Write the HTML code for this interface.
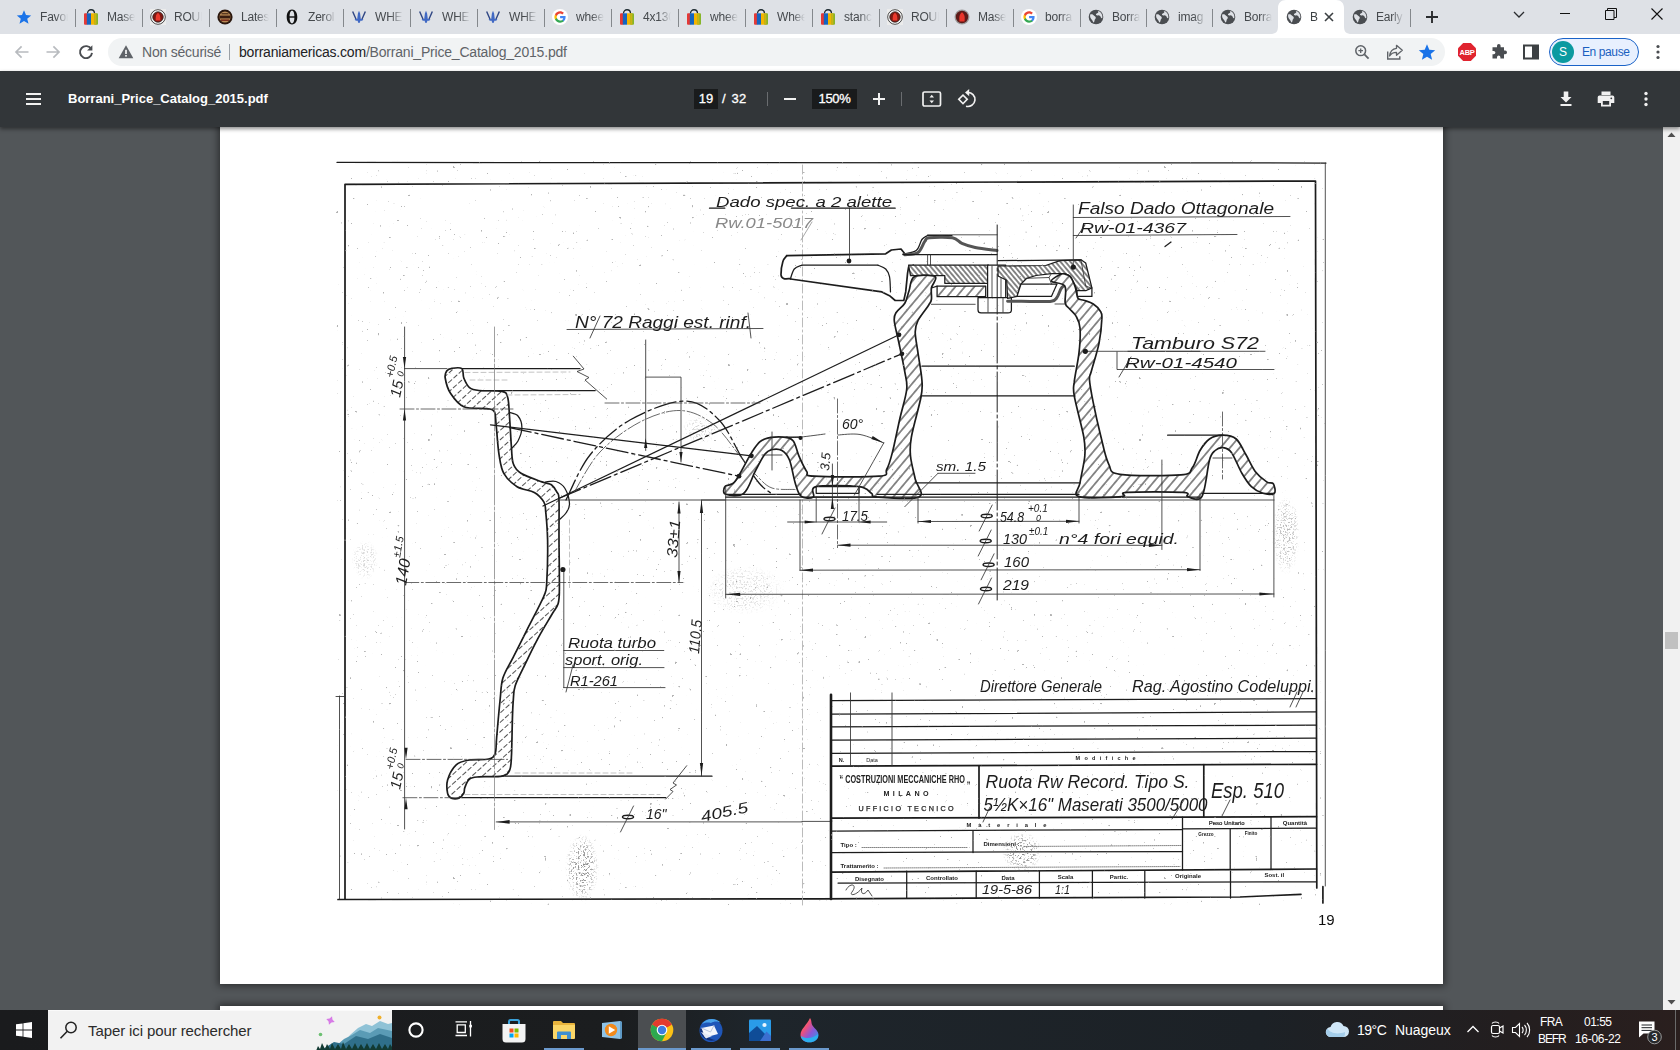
<!DOCTYPE html>
<html><head><meta charset="utf-8">
<style>
*{box-sizing:border-box;margin:0;padding:0}
html,body{width:1680px;height:1050px;overflow:hidden;background:#525659;font-family:"Liberation Sans",sans-serif}
.abs{position:absolute}
#tabbar{position:absolute;left:0;top:0;width:1680px;height:34px;background:#dee1e6}
.tab{position:absolute;top:0;height:34px;width:67px;font-size:12px;letter-spacing:-.2px;color:#45494d;line-height:34px;white-space:nowrap;overflow:hidden}
.tab .ic{position:absolute;left:8px;top:9px;width:16px;height:16px}
.tab .tx{position:absolute;left:32px;top:0;width:28px;overflow:hidden;-webkit-mask-image:linear-gradient(90deg,#000 55%,transparent 100%);mask-image:linear-gradient(90deg,#000 55%,transparent 100%)}
.acttab{position:absolute;top:0;width:83px;height:34px}
.sep{position:absolute;top:9px;width:1px;height:18px;background:#84888c}
#toolbar{position:absolute;left:0;top:34px;width:1680px;height:37px;background:#fff}
#omni{position:absolute;left:108px;top:4px;width:1337px;height:28px;border-radius:14px;background:#f1f3f4}
#pdfbar{position:absolute;left:0;top:71px;width:1680px;height:56px;background:#323639;box-shadow:0 2px 4px rgba(0,0,0,.45);z-index:3}
#view{position:absolute;left:0;top:127px;width:1664px;height:883px;background:#525659;overflow:hidden}
#page{position:absolute;left:220px;top:-20px;width:1223px;height:877px;background:#fff;box-shadow:0 0 7px 2px rgba(0,0,0,.45)}
#page2{position:absolute;left:220px;top:879px;width:1223px;height:60px;background:#fff;box-shadow:0 0 7px 2px rgba(0,0,0,.45)}
#scroll{position:absolute;left:1663px;top:127px;width:17px;height:883px;background:#f1f1f1}
#taskbar{position:absolute;left:0;top:1010px;width:1680px;height:40px;background:linear-gradient(90deg,#1a1b1d 0,#1b1d1f 37%,#1e252b 45%,#1c2126 75%,#231e1f 90%,#2a1f1e 100%);z-index:5}
.tt{color:#fff;line-height:16px;white-space:nowrap}
</style></head><body>
<!--TABBAR-->
<svg width="0" height="0" style="position:absolute">
<defs>
<symbol id="i-star" viewBox="0 0 16 16"><path d="M8 1.2 L10 6 L15.2 6.4 L11.2 9.8 L12.5 14.8 L8 12.1 L3.5 14.8 L4.8 9.8 L0.8 6.4 L6 6 Z" fill="#1a73e8"/></symbol>
<symbol id="i-bag" viewBox="0 0 16 16"><path d="M4.5 4.5 C4.5 -0.5 11.5 -0.5 11.5 4.5" fill="none" stroke="#1d2a30" stroke-width="1.3"/><rect x="1" y="4.3" width="3.6" height="11.4" rx="1" fill="#e53935"/><rect x="3.8" y="4.3" width="4.2" height="11.4" fill="#1565c0"/><rect x="8" y="4.3" width="4" height="11.4" fill="#f4b400"/><rect x="11.4" y="4.3" width="3.6" height="11.4" rx="1" fill="#86b52a"/><rect x="11.4" y="4.3" width="2" height="11.4" fill="#c9b414"/></symbol>
<symbol id="i-red" viewBox="0 0 16 16"><rect width="16" height="16" fill="#ececec"/><circle cx="8" cy="8" r="7.300" fill="#fff" stroke="#333" stroke-width=".9"/><circle cx="8" cy="8" r="5.300" fill="#7d1912" stroke="#2a2a2a" stroke-width=".7"/><path d="M8 3.800 C9.900 5 10.600 7.500 10.300 11.500 H5.700 C5.400 7.500 6.100 5 8 3.800Z" fill="#ea3a2d"/></symbol>
<symbol id="i-red2" viewBox="0 0 16 16"><circle cx="8" cy="8" r="7.5" fill="#9a9a9a"/><circle cx="8" cy="8" r="6.2" fill="#5d1a18"/><path d="M8 3.2 C10.8 5 11 8.5 10.5 12.5 H5.5 C5 8.5 5.2 5 8 3.2Z" fill="#e8352b"/></symbol>
<symbol id="i-brown" viewBox="0 0 16 16"><circle cx="8" cy="8" r="7.6" fill="#2a170e"/><circle cx="8" cy="8" r="5.6" fill="#b98a55"/><rect x="2.5" y="6.6" width="11" height="2.8" fill="#3a1d10"/><rect x="4" y="10.4" width="8" height="1.6" fill="#7a2d1c"/><rect x="4.5" y="4" width="7" height="1.4" fill="#5b3a22"/></symbol>
<symbol id="i-theta" viewBox="0 0 16 16"><path d="M8 0.600 C11.300 0.600 13.300 3.800 13.300 8 C13.300 12.200 11.300 15.400 8 15.400 C4.700 15.400 2.700 12.200 2.700 8 C2.700 3.800 4.700 0.600 8 0.600 Z M8 1.700 C6.300 1.700 5.600 4.200 5.600 8 C5.600 11.800 6.300 14.300 8 14.300 C9.700 14.300 10.400 11.800 10.400 8 C10.400 4.200 9.700 1.700 8 1.700 Z" fill="#111" fill-rule="evenodd"/><rect x="5" y="7.300" width="6" height="1.400" fill="#111"/></symbol>
<symbol id="i-tri" viewBox="0 0 16 16"><path d="M1 2.700 L2.300 2.300 L5.800 10.200 H4.300 Z M15 2.700 L13.700 2.300 L10.200 10.200 H11.700 Z" fill="#2f4684"/><path d="M8 1.800 L9.100 4.500 L9.800 10.100 H6.200 L6.900 4.500 Z M3.600 10 H12.400 L11.300 11.700 H4.700 Z M6.700 11.700 H9.300 L8.900 13.700 H7.100 Z" fill="#4169c4"/></symbol>
<symbol id="i-g" viewBox="0 0 16 16"><circle cx="8" cy="8" r="8" fill="#fff"/><path d="M13.6 8.1c0-.4 0-.8-.1-1.2H8.100v2.300h3.100c-.1.700-.5 1.300-1.100 1.700v1.400h1.800c1.100-1 1.700-2.400 1.700-4.200z" fill="#4285f4"/><path d="M8.100 13.700c1.500 0 2.800-.5 3.800-1.400l-1.800-1.400c-.5.300-1.200.600-2 .600-1.500 0-2.700-1-3.200-2.400H3v1.500c.900 1.900 2.800 3.100 5.100 3.100z" fill="#34a853"/><path d="M4.900 9.100c-.1-.3-.2-.7-.2-1.100s.1-.8.200-1.100V5.400H3C2.600 6.200 2.400 7.100 2.400 8s.2 1.800.6 2.600l1.900-1.500z" fill="#fbbc05"/><path d="M8.100 4.500c.8 0 1.600.3 2.200.9l1.600-1.600c-1-.9-2.300-1.500-3.800-1.500-2.300 0-4.200 1.300-5.100 3.100l1.900 1.500c.5-1.400 1.700-2.400 3.200-2.400z" fill="#ea4335"/></symbol>
<symbol id="i-globe" viewBox="0 0 16 16"><circle cx="8" cy="8" r="7.3" fill="#4a4d51"/><path d="M2.200 5.500 C3.500 4.800 5 5.200 5.600 6.300 C6.100 7.300 7.600 7.200 7.800 8.400 C8 9.600 6.600 10 6.600 11.200 C6.600 12.200 6 13.200 5.200 13.400 C4.800 12 4.400 11 3.400 10.200 C2.400 9.300 1.800 7.500 2.200 5.500Z M8.300 1.600 C9.800 1.800 10.600 2.600 10.200 3.600 C9.700 4.600 8.300 4.300 8 5.300 C7.600 6.300 9 6.600 10 6.400 C11.200 6.200 12.200 7 12.800 8.200 C13.200 9.200 13.800 9.400 14.300 9 C14.800 6.500 13.500 2.300 8.300 1.600Z" fill="#dee1e6"/></symbol>
</defs></svg>
<div id="tabbar">
<div class="tab" style="left:8px"><svg class="ic"><use href="#i-star"/></svg><span class="tx">Favor</span></div>
<div class="sep" style="left:75px"></div>
<div class="tab" style="left:75px"><svg class="ic"><use href="#i-bag"/></svg><span class="tx">Mase</span></div>
<div class="sep" style="left:142px"></div>
<div class="tab" style="left:142px"><svg class="ic"><use href="#i-red"/></svg><span class="tx">ROUE</span></div>
<div class="sep" style="left:209px"></div>
<div class="tab" style="left:209px"><svg class="ic"><use href="#i-brown"/></svg><span class="tx">Lates</span></div>
<div class="sep" style="left:276px"></div>
<div class="tab" style="left:276px"><svg class="ic"><use href="#i-theta"/></svg><span class="tx">Zerol</span></div>
<div class="sep" style="left:343px"></div>
<div class="tab" style="left:343px"><svg class="ic"><use href="#i-tri"/></svg><span class="tx">WHE</span></div>
<div class="sep" style="left:410px"></div>
<div class="tab" style="left:410px"><svg class="ic"><use href="#i-tri"/></svg><span class="tx">WHE</span></div>
<div class="sep" style="left:477px"></div>
<div class="tab" style="left:477px"><svg class="ic"><use href="#i-tri"/></svg><span class="tx">WHE</span></div>
<div class="sep" style="left:544px"></div>
<div class="tab" style="left:544px"><svg class="ic"><use href="#i-g"/></svg><span class="tx">whee</span></div>
<div class="sep" style="left:611px"></div>
<div class="tab" style="left:611px"><svg class="ic"><use href="#i-bag"/></svg><span class="tx">4x130</span></div>
<div class="sep" style="left:678px"></div>
<div class="tab" style="left:678px"><svg class="ic"><use href="#i-bag"/></svg><span class="tx">whee</span></div>
<div class="sep" style="left:745px"></div>
<div class="tab" style="left:745px"><svg class="ic"><use href="#i-bag"/></svg><span class="tx">Whee</span></div>
<div class="sep" style="left:812px"></div>
<div class="tab" style="left:812px"><svg class="ic"><use href="#i-bag"/></svg><span class="tx">stanc</span></div>
<div class="sep" style="left:879px"></div>
<div class="tab" style="left:879px"><svg class="ic"><use href="#i-red"/></svg><span class="tx">ROUE</span></div>
<div class="sep" style="left:946px"></div>
<div class="tab" style="left:946px"><svg class="ic"><use href="#i-red2"/></svg><span class="tx">Mase</span></div>
<div class="sep" style="left:1013px"></div>
<div class="tab" style="left:1013px"><svg class="ic"><use href="#i-g"/></svg><span class="tx">borra</span></div>
<div class="sep" style="left:1080px"></div>
<div class="tab" style="width:66px;left:1080px"><svg class="ic"><use href="#i-globe"/></svg><span class="tx">Borra</span></div>
<div class="sep" style="left:1146px"></div>
<div class="tab" style="width:66px;left:1146px"><svg class="ic"><use href="#i-globe"/></svg><span class="tx">imag</span></div>
<div class="sep" style="left:1212px"></div>
<div class="tab" style="width:66px;left:1212px"><svg class="ic"><use href="#i-globe"/></svg><span class="tx">Borra</span></div>
<div class="acttab" style="left:1270px"><svg width="82" height="34" viewBox="0 0 82 34"><path d="M0 34 C6 34 8 32 8 26 V8 C8 3 11 0 16 0 H66 C71 0 74 3 74 8 V26 C74 32 76 34 82 34 Z" fill="#fff"/></svg></div>
<div class="tab" style="width:66px;left:1278px;color:#3c4043"><svg class="ic"><use href="#i-globe"/></svg><span class="tx" style="width:12px">B</span><svg class="abs" style="left:45px;top:11px" width="12" height="12" viewBox="0 0 12 12"><path d="M2 2 L10 10 M10 2 L2 10" stroke="#3c4043" stroke-width="1.6" fill="none"/></svg></div>
<div class="tab" style="width:66px;left:1344px"><svg class="ic"><use href="#i-globe"/></svg><span class="tx">Early</span></div>
<div class="sep" style="left:1410px"></div>
<svg class="abs" style="left:1424px;top:9px" width="16" height="16" viewBox="0 0 16 16"><path d="M2 8 H14 M8 2 V14" stroke="#2a2c2f" stroke-width="1.900"/></svg>
<svg class="abs" style="left:1511px;top:8px" width="16" height="14" viewBox="0 0 16 14"><path d="M3 4 L8 9 L13 4" stroke="#2a2c2f" stroke-width="1.300" fill="none"/></svg>
<div class="abs" style="left:1560px;top:13px;width:10px;height:1px;background:#111"></div>
<svg class="abs" style="left:1605px;top:8px" width="12" height="12" viewBox="0 0 12 12"><path d="M.5 2.500 H9 V11.500 H.5 Z M2.500 2.500 V.500 H11.500 V9.500 H9" stroke="#111" stroke-width="1" fill="none"/></svg>
<svg class="abs" style="left:1651px;top:8px" width="12" height="12" viewBox="0 0 12 12"><path d="M.5 .5 L11.500 11.500 M11.500 .5 L.5 11.500" stroke="#111" stroke-width="1.100" fill="none"/></svg>
</div>
<!--TOOLBAR-->
<div id="toolbar"><div id="omni"></div>
<svg class="abs" style="left:13px;top:9px" width="18" height="18" viewBox="0 0 18 18"><path d="M15.500 9 H3.200 M8.600 3.400 L3 9 L8.600 14.600" stroke="#b8bbbf" stroke-width="1.700" fill="none"/></svg>
<svg class="abs" style="left:44px;top:9px" width="18" height="18" viewBox="0 0 18 18"><path d="M2.500 9 H14.800 M9.400 3.400 L15 9 L9.400 14.600" stroke="#b8bbbf" stroke-width="1.700" fill="none"/></svg>
<svg class="abs" style="left:77px;top:9px" width="18" height="18" viewBox="0 0 18 18"><path d="M14.300 6.200 A6 6 0 1 0 15 9.800" stroke="#4a4d51" stroke-width="1.900" fill="none"/><path d="M15.400 2.300 V7.600 H10.100 Z" fill="#4a4d51"/></svg>
<svg class="abs" style="left:118px;top:10px" width="16" height="16" viewBox="0 0 16 16"><path d="M8 1.300 L15.300 14.200 H0.700 Z" fill="#5f6368"/><rect x="7.200" y="5.800" width="1.600" height="4.200" fill="#fff"/><rect x="7.200" y="11" width="1.600" height="1.600" fill="#fff"/></svg>
<span class="abs" style="left:142px;top:9px;font-size:14px;letter-spacing:-.22px;color:#5f6368;line-height:18px">Non sécurisé</span>
<div class="abs" style="left:229px;top:10px;width:1px;height:16px;background:#9aa0a6"></div>
<span class="abs" style="left:239px;top:9px;font-size:14px;letter-spacing:-.2px;color:#202124;line-height:18px">borraniamericas.com<span style="color:#5f6368">/Borrani_Price_Catalog_2015.pdf</span></span>
<svg class="abs" style="left:1353px;top:9px" width="18" height="18" viewBox="0 0 18 18"><circle cx="7.700" cy="7.700" r="4.900" fill="none" stroke="#5f6368" stroke-width="1.500"/><path d="M11.400 11.400 L15.600 15.600" stroke="#5f6368" stroke-width="1.800"/><path d="M5.400 7.700 H10 M7.700 5.400 V10" stroke="#5f6368" stroke-width="1.300"/></svg>
<svg class="abs" style="left:1385px;top:8px" width="20" height="20" viewBox="0 0 20 20"><path d="M2.700 9.500 V17 H14.800 V14.200" fill="none" stroke="#5f6368" stroke-width="1.400"/><path d="M11.500 3.300 L17.300 8.300 L11.500 13.300 V10.300 C8 10.300 6 11.500 4.600 14 C5 10 7.300 6.800 11.500 6.300 Z" fill="none" stroke="#5f6368" stroke-width="1.300" stroke-linejoin="round"/></svg>
<svg class="abs" style="left:1418px;top:9px" width="18" height="18" viewBox="0 0 18 18"><path d="M9 1.300 L11.300 6.700 L17.200 7.200 L12.700 11.100 L14.100 16.800 L9 13.700 L3.900 16.800 L5.300 11.100 L0.800 7.200 L6.700 6.700 Z" fill="#1a73e8"/></svg>
<svg class="abs" style="left:1457px;top:8px" width="20" height="20" viewBox="0 0 20 20"><path d="M6.200 1 H13.800 L19 6.200 V13.800 L13.800 19 H6.200 L1 13.800 V6.200 Z" fill="#e0242f"/><text x="10" y="13" font-family="Liberation Sans" font-weight="700" font-size="7.500" fill="#fff" text-anchor="middle" letter-spacing="-.3">ABP</text></svg>
<svg class="abs" style="left:1490px;top:9px" width="18" height="18" viewBox="0 0 18 18"><path d="M7 2.800 a1.800 1.800 0 0 1 3.600 0 V4.200 H14 V7.600 H15.200 a1.800 1.800 0 0 1 0 3.600 H14 V15.500 H10.400 V14.300 a1.700 1.700 0 0 0 -3.400 0 V15.500 H2.500 V11.300 H3.700 a1.700 1.700 0 0 0 0 -3.400 H2.500 V4.200 H7 Z" fill="#4a4d51"/></svg>
<svg class="abs" style="left:1522px;top:9px" width="18" height="18" viewBox="0 0 18 18"><rect x="2" y="2.500" width="14" height="13" fill="none" stroke="#3c4043" stroke-width="2"/><rect x="10" y="2.500" width="6" height="13" fill="#3c4043"/></svg>
<div class="abs" style="left:1549px;top:4px;width:90px;height:28px;border-radius:14px;background:#e8f0fe;border:1.500px solid #1a63c8"></div>
<div class="abs" style="left:1552px;top:7px;width:22px;height:22px;border-radius:11px;background:#0b9aa0;color:#fff;font-size:12px;line-height:22px;text-align:center">S</div>
<span class="abs" style="left:1582px;top:10px;font-size:12px;letter-spacing:-.4px;color:#1a5fc0;line-height:16px">En pause</span>
<svg class="abs" style="left:1655px;top:9px" width="6" height="18" viewBox="0 0 6 18"><circle cx="3" cy="3.500" r="1.600" fill="#4a4d51"/><circle cx="3" cy="9" r="1.600" fill="#4a4d51"/><circle cx="3" cy="14.500" r="1.600" fill="#4a4d51"/></svg>
</div>
<!--PDFBAR-->
<div id="pdfbar">
<svg class="abs" style="left:26px;top:21px" width="16" height="14" viewBox="0 0 16 14"><path d="M0 2 H15 M0 7 H15 M0 12 H15" stroke="#f1f1f1" stroke-width="1.900"/></svg>
<span class="abs" style="left:68px;top:19px;font-size:13px;font-weight:700;color:#fff;line-height:18px;letter-spacing:-.01px">Borrani_Price_Catalog_2015.pdf</span>
<div class="abs" style="left:694px;top:18px;width:24px;height:20px;background:#191b1c;color:#fff;font-size:13px;line-height:20px;text-align:center;-webkit-text-stroke:.3px #fff">19</div>
<span class="abs" style="left:722px;top:18px;color:#fff;font-size:13px;line-height:20px;word-spacing:2px;letter-spacing:.2px;-webkit-text-stroke:.3px #fff">/ 32</span>
<div class="abs" style="left:767px;top:21px;width:1px;height:14px;background:#6a6d70"></div>
<div class="abs" style="left:784px;top:27px;width:12px;height:2px;background:#f1f1f1"></div>
<div class="abs" style="left:812px;top:18px;width:45px;height:20px;background:#191b1c;color:#fff;font-size:13px;line-height:20px;text-align:center;letter-spacing:-.3px;-webkit-text-stroke:.3px #fff">150%</div>
<div class="abs" style="left:873px;top:27px;width:12px;height:2px;background:#f1f1f1"></div>
<div class="abs" style="left:878px;top:22px;width:2px;height:12px;background:#f1f1f1"></div>
<div class="abs" style="left:901px;top:21px;width:1px;height:14px;background:#6a6d70"></div>
<svg class="abs" style="left:921px;top:19px" width="22" height="18" viewBox="0 0 22 18"><rect x="2" y="2" width="17.500" height="14" rx="1.500" fill="none" stroke="#f1f1f1" stroke-width="1.700"/><path d="M10.750 4.800 L13 7.600 H8.500 Z M10.750 13.200 L13 10.400 H8.500 Z" fill="#f1f1f1"/></svg>
<svg class="abs" style="left:957px;top:17px" width="22" height="22" viewBox="0 0 22 22"><path d="M10.500 4.500 A7 7 0 1 1 9 18.200" fill="none" stroke="#f1f1f1" stroke-width="1.700"/><path d="M12.200 1 L8 4.600 L12.200 8.200 Z" fill="#f1f1f1"/><rect x="3" y="8.300" width="6" height="6" fill="none" stroke="#f1f1f1" stroke-width="1.600" transform="rotate(45 6 11.300)"/></svg>
<svg class="abs" style="left:1557px;top:19px" width="18" height="18" viewBox="0 0 18 18"><path d="M6.700 1.500 H11.300 V7 H14.500 L9 12.500 L3.500 7 H6.700 Z" fill="#f1f1f1"/><rect x="3.500" y="14" width="11" height="2" fill="#f1f1f1"/></svg>
<svg class="abs" style="left:1597px;top:19px" width="18" height="18" viewBox="0 0 18 18"><rect x="4.500" y="1.500" width="9" height="3.500" fill="#f1f1f1"/><path d="M2.500 5.500 H15.500 A1.800 1.800 0 0 1 17.300 7.300 V13 H14 V16.500 H4 V13 H0.700 V7.300 A1.800 1.800 0 0 1 2.500 5.500 Z M5.800 11 V14.800 H12.200 V11 Z" fill="#f1f1f1" fill-rule="evenodd"/><circle cx="14.300" cy="8.300" r=".9" fill="#323639"/></svg>
<svg class="abs" style="left:1643px;top:19px" width="6" height="18" viewBox="0 0 6 18"><circle cx="3" cy="3.500" r="1.700" fill="#f1f1f1"/><circle cx="3" cy="9" r="1.700" fill="#f1f1f1"/><circle cx="3" cy="14.500" r="1.700" fill="#f1f1f1"/></svg>
</div>
<!--VIEW-->
<div id="view"><div id="page"></div><!--DRAW--><svg id="dr" class="abs" style="left:0;top:-127px" width="1664" height="1050" viewBox="0 0 1664 1050">
<defs>
<pattern id="hf" width="7.300" height="7.300" patternUnits="userSpaceOnUse" patternTransform="rotate(-50)"><rect width="7.300" height="7.300" fill="#fff"/><path d="M0 3.650 H7.300" stroke="#111" stroke-width=".95"/></pattern>
<pattern id="hb" width="3.800" height="3.800" patternUnits="userSpaceOnUse" patternTransform="rotate(50)"><rect width="3.800" height="3.800" fill="#fff"/><path d="M0 1.900 H3.800" stroke="#111" stroke-width="1"/></pattern>
<pattern id="hd" width="7" height="7" patternUnits="userSpaceOnUse" patternTransform="rotate(-42)"><rect width="7" height="7" fill="#fff"/><path d="M0 3.500 H5" stroke="#333" stroke-width=".85"/></pattern>
<filter id="rough" x="-2%" y="-2%" width="104%" height="104%"><feTurbulence type="fractalNoise" baseFrequency=".9" numOctaves="1" seed="3" result="n"/><feDisplacementMap in="SourceGraphic" in2="n" scale=".9"/><feGaussianBlur stdDeviation=".32"/></filter>
<filter id="speck" x="0" y="0" width="100%" height="100%"><feTurbulence type="fractalNoise" baseFrequency=".55" numOctaves="2" seed="11"/><feColorMatrix type="matrix" values="0 0 0 0 .15  0 0 0 0 .15  0 0 0 0 .15  -5 -5 0 0 4.780"/></filter>
<filter id="speck2" x="0" y="0" width="100%" height="100%"><feTurbulence type="fractalNoise" baseFrequency=".36" numOctaves="2" seed="5"/><feColorMatrix type="matrix" values="0 0 0 0 .3  0 0 0 0 .3  0 0 0 0 .3  -9 -9 0 0 5.330"/></filter>
<radialGradient id="sm"><stop offset="0" stop-color="#fff"/><stop offset=".6" stop-color="#fff" stop-opacity=".7"/><stop offset="1" stop-color="#fff" stop-opacity="0"/></radialGradient>
<mask id="smk"><rect width="1664" height="1050" fill="#000"/>
<ellipse cx="582" cy="868" rx="17" ry="34" fill="url(#sm)"/><ellipse cx="1022" cy="852" rx="20" ry="20" fill="url(#sm)"/><ellipse cx="1286" cy="535" rx="14" ry="40" fill="url(#sm)" opacity=".6"/><ellipse cx="745" cy="590" rx="40" ry="25" fill="url(#sm)" opacity=".3"/><ellipse cx="365" cy="560" rx="14" ry="20" fill="url(#sm)" opacity=".35"/><ellipse cx="700" cy="430" rx="18" ry="14" fill="url(#sm)" opacity=".4"/></mask>
</defs>
<style>
#dr g path,#dr g ellipse{fill:none;stroke:#1c1c1c;stroke-linecap:round;stroke-linejoin:round}
#dr .kk{stroke-width:2.600}
#dr .k{stroke-width:1.700}
#dr .m{stroke-width:1.250}
#dr .t{stroke-width:.85;stroke:#333}
#dr .d{stroke-width:.7;stroke:#aaa;stroke-dasharray:5 3}
#dr .tl{stroke-width:.7;stroke:#777;stroke-dasharray:30 2 3 2}
#dr .cl{stroke-width:.8;stroke:#444;stroke-dasharray:14 2.500 2 2.500}
#dr .cl2{stroke-width:1;stroke:#222;stroke-dasharray:40 3 3 3}
#dr .dd{stroke-width:1.300;stroke-dasharray:22 4 3 4}
#dr .g3{stroke-width:3;stroke:#555}
#dr .vl{stroke-width:.8;stroke:#aaa;stroke-dasharray:9 3 2 3}
#dr .dot{stroke-width:.8;stroke:#666;stroke-dasharray:1 1}
#dr .f,#dr circle.f{fill:#1c1c1c;stroke:none}
#dr path.f{fill:#1c1c1c;stroke:none}
#dr .hw{font-family:"Liberation Sans",sans-serif;font-style:italic;fill:#1c1c1c;stroke:none}
#dr .hwl{font-family:"Liberation Sans",sans-serif;font-style:italic;fill:#8a8a8a}
#dr .pt{font-family:"Liberation Sans",sans-serif;fill:#222}
</style>
<g filter="url(#rough)">
<path class="m" d="M337 162.4 L1326 163"/>
<path class="t" d="M1325.3 163 L1325.3 886"/>
<path class="k" d="M1322.9 886.7 L1322.9 903"/>
<path class="k" d="M345 899 L345 184.3 L1315.5 181 L1316.8 888"/>
<path class="k" d="M338 899.5 L820 898.8 L1240 897 L1301 894.3"/>
<path class="t" d="M339.5 696 L339.5 899"/>
<path class="t" d="M336 696.5 L345 696.5"/>
<path d="M461.9 368.6 C459.9 367 454.5 367.9 452 368.3 C449.5 368.7 447.8 369.4 446.7 371 C445.6 372.6 444.6 374.3 445.2 378 C445.8 381.7 447.4 388.5 450.5 393.3 C453.6 398.1 457.8 404.1 463.8 406.7 C469.8 409.2 481.6 407.8 486.7 408.6 C491.8 409.4 492.7 408.6 494.3 411.5 C495.9 414.4 495.4 418.6 496.2 425.7 C497 432.8 497.7 446.4 499 454.3 C500.3 462.2 500.8 467.9 503.8 473.3 C506.8 478.7 512 483.5 517.1 486.7 C522.2 489.9 529.8 489.9 534.3 492.4 C538.8 494.9 541.9 498.7 543.8 501.9 C545.7 505.1 545.1 505 545.7 511.4 C546.3 517.8 547.4 528.1 547.6 540 C547.8 551.9 547.3 573.5 546.7 582.9 C546.1 592.3 546.8 588.9 543.8 596.2 C540.8 603.5 533.7 616.6 528.6 626.7 C523.5 636.9 517.6 648.5 513.3 657.1 C509 665.7 505.1 670.8 502.9 678.1 C500.7 685.4 501.1 691 500 701 C498.9 711 497.4 729.4 496.6 738.1 C495.8 746.8 496.5 749.8 495.2 753.3 C493.9 756.8 492.9 757.9 488.6 759 C484.3 760.1 474.9 759 469.5 760 C464.1 761 459.8 761.5 456.2 764.8 C452.6 768.1 449 775.2 447.6 780 C446.2 784.8 447 790.3 447.6 793.3 C448.2 796.3 449.5 797.3 451.4 798.1 C453.3 798.9 456.9 798.9 459 798.1 C461.1 797.3 462.8 795 463.8 793.3 C464.8 791.5 463.9 790 464.8 787.6 C465.8 785.2 467.1 780.8 469.5 779 C471.9 777.2 473.6 777.3 479 776.8 C484.4 776.3 496.8 777.2 501.9 776.2 C507 775.2 507.9 773.7 509.5 770.5 C511.1 767.3 510.9 765.7 511.4 757.1 C511.9 748.5 512.1 728.5 512.4 719 C512.7 709.5 512.8 705.5 513.3 700 C513.8 694.5 513.3 691.6 515.2 685.7 C517.1 679.8 521 672.7 524.8 664.8 C528.6 656.9 533.7 646.4 538.1 638.1 C542.5 629.8 548.1 620.9 551.4 615.2 C554.7 609.5 556.8 608.2 558.1 603.8 C559.4 599.4 559.2 599.2 559.4 588.6 C559.5 578 559.1 554.8 559 540 C558.9 525.2 559.3 507.9 559 500 C558.7 492.1 558.4 494.9 557.1 492.4 C555.8 489.9 553.9 486.6 551.4 484.8 C548.9 483.1 547 483.8 541.9 481.9 C536.8 480 525.8 476.3 521 473.3 C516.2 470.3 514.9 468.2 513.3 463.8 C511.7 459.4 512 454.6 511.4 446.7 C510.8 438.8 510.1 424.5 509.5 416.2 C508.9 407.9 508.9 401.2 507.6 397.1 C506.3 393 506.7 392.5 501.9 391.4 C497.1 390.3 484.4 391.1 479 390.5 C473.6 389.9 472 389.7 469.5 387.6 C467 385.5 465.1 381.2 463.8 378 C462.5 374.8 463.9 370.2 461.9 368.6Z" style="fill:url(#hd)" class="k"/>
<path class="m" d="M509.5 412.4 C510.9 413 515.9 413.5 518 416 C520.1 418.5 521.9 423.4 521.9 427.6 C521.9 431.8 519.8 437.5 518 441 C516.2 444.5 512.5 447.3 511.4 448.6"/>
<path class="m" d="M545.7 481.9 C547.4 481.8 552.8 480.4 556 481.5 C559.2 482.6 562.8 484.8 565 488.5 C567.2 492.2 569.3 499.7 569.5 503.8 C569.7 507.9 567.6 510.5 566 513 C564.4 515.5 561 518 560 519"/>
<path class="m" d="M461.9 368.6 L580 368.6"/>
<path class="m" d="M479 390.5 L595.2 390.5"/>
<path class="t" d="M573.3 356.2 L584 369 L577 371.5 L589 377.5 L585 380 L606.7 399"/>
<path class="d" d="M465 372.5 L570 372"/>
<path class="d" d="M470 380 L510 380"/>
<path class="d" d="M507 395 L580 394.5"/>
<path class="m" d="M501.9 776.2 L712 776.2"/>
<path class="m" d="M462 797.7 L665.7 797.7"/>
<path class="d" d="M515 773 L632 773"/>
<path class="d" d="M465 794.5 L660 794.5"/>
<path class="t" d="M686.7 765.7 L673 783 L676.5 785 L670 789.5 L673 791.5 L665.7 799"/>
<path class="t" d="M404.6 327 L404.6 829"/>
<path class="tl" d="M494.5 327 L494.5 829.5"/>
<path class="t" d="M404.4 368.6 L447 368.6"/>
<path class="cl" d="M400 409 L513 409"/>
<path class="cl" d="M404.8 582.5 L683 582.5"/>
<path class="cl" d="M406 759.4 L507.6 759.4"/>
<path class="cl" d="M402.9 797.7 L462 797.7"/>
<path class="f" d="M404.5 368.6 L402.9 357 L406.1 357Z"/>
<path class="f" d="M404.5 409 L406.1 420.6 L402.9 420.6Z"/>
<path class="f" d="M406 759.4 L404.4 747.8 L407.6 747.8Z"/>
<path class="f" d="M406 797.7 L407.6 809.3 L404.4 809.3Z"/>
<path class="t" d="M496.2 821.9 L802 821.9"/>
<path class="f" d="M496.5 821.9 L509.6 820 L509.6 823.8Z"/>
<path class="vl" d="M802.5 165 L802.5 905"/>
<path class="t" d="M831.8 821.4 L802 821.4"/>
<text class="hw" x="400" y="398" font-size="15" transform="rotate(-78 400 398)">15</text>
<text class="hw" x="393" y="378" font-size="11" transform="rotate(-78 393 378)">+0.5</text>
<text class="hw" x="403" y="377" font-size="9" transform="rotate(-78 403 377)">0</text>
<text class="hw" x="406" y="586" font-size="16" transform="rotate(-80 406 586)">140</text>
<text class="hw" x="400" y="558" font-size="11" transform="rotate(-80 400 558)">±1.5</text>
<text class="hw" x="400" y="790" font-size="15" transform="rotate(-78 400 790)">15</text>
<text class="hw" x="393" y="770" font-size="11" transform="rotate(-78 393 770)">+0.5</text>
<text class="hw" x="403" y="769" font-size="9" transform="rotate(-78 403 769)">0</text>
<ellipse class="t" cx="628" cy="817" rx="5.5" ry="1.7" style="stroke-width:1.5;stroke:#1c1c1c"/>
<path class="t" d="M633.5 806 L620.5 832"/>
<text class="hw" x="646" y="819" font-size="14">16"</text>
<text class="hw" x="702" y="822" font-size="15" transform="rotate(-12 702 822)" textLength="48" lengthAdjust="spacingAndGlyphs">405.5</text>
<path class="t" d="M563.8 569.5 L563.8 687.6"/>
<path class="d" d="M569.5 520 L569.5 587.6"/>
<path class="t" d="M563.8 650.5 L663.8 650.5"/>
<path class="t" d="M563.8 667.6 L664 667.6"/>
<path class="t" d="M563.8 687.6 L665 687.6"/>
<text class="hw" x="568" y="647.6" font-size="15" textLength="88" lengthAdjust="spacingAndGlyphs">Ruota turbo</text>
<text class="hw" x="565" y="665.2" font-size="14" textLength="78" lengthAdjust="spacingAndGlyphs">sport. orig.</text>
<text class="hw" x="570" y="685.5" font-size="14" textLength="48" lengthAdjust="spacingAndGlyphs">R1-261</text>
<path class="t" d="M573 665 L566 692"/>
<path class="t" d="M679 502 L679 582.5"/>
<path class="f" d="M679 502 L680.6 513.6 L677.4 513.6Z"/>
<path class="f" d="M679 582.5 L677.4 570.9 L680.6 570.9Z"/>
<text class="hw" x="677" y="558" font-size="15" transform="rotate(-85 677 558)" textLength="38" lengthAdjust="spacingAndGlyphs">33±1</text>
<path class="t" d="M701.5 500 L701.5 776"/>
<path class="f" d="M701.5 500 L703.1 513 L699.9 513Z"/>
<path class="f" d="M701.5 776 L699.9 763 L703.1 763Z"/>
<text class="hw" x="699" y="654" font-size="15" transform="rotate(-85 699 654)" textLength="34" lengthAdjust="spacingAndGlyphs">110.5</text>
<path class="t" d="M560 500 L725 500"/>
<path class="t" d="M645.7 340 L645.7 450.5"/>
<path class="t" d="M645.7 377.1 L681 377.1 L681 462"/>
<path class="f" d="M645.7 438 L647.3 448.1 L644.1 448.1Z"/>
<path class="f" d="M681 462 L679.4 451.9 L682.6 451.9Z"/>
<text class="hw" x="575" y="327.5" font-size="16" textLength="176" lengthAdjust="spacingAndGlyphs">N° 72 Raggi est. rinf.</text>
<path class="t" d="M567 329.5 L763 328.5"/>
<path class="t" d="M600 316 L590 338"/>
<path class="t" d="M748 313 L751 338"/>
<path class="m" d="M490.5 424.8 L751.4 455.8"/>
<path class="dd" d="M509.5 427.6 L739 476.2"/>
<path class="m" d="M543 506 L899 334.8"/>
<path class="dd" d="M560 498 L901.9 353.8"/>
<path class="dd" d="M566 500 C570 492.5 579.3 468.3 590 455 C600.7 441.7 614.2 429 630 420 C645.8 411 670 401 684.8 401 C699.6 401 709.5 410.5 719 420 C728.5 429.5 735.3 447.5 742 458 C748.7 468.5 754 477 759 483 C764 489 769.8 492.2 772 494"/>
<path class="cl" d="M574.3 492 C578.6 485.3 589 463.7 600 452 C611 440.3 626.7 428.9 640 422 C653.3 415.1 667.8 410.2 680 410.5 C692.2 410.8 703 416.4 713 424 C723 431.6 732.7 447.3 740 456 C747.3 464.7 751.7 470.7 757 476 C762.3 481.3 765.7 485.8 772 488 C778.3 490.2 791.2 489.2 795 489.5"/>
<path class="cl" d="M605 403 L760 403"/>
<path class="k" d="M786.7 255.7 C786.1 256.6 783.9 258.2 782.9 261.4 C781.9 264.6 780.9 271.9 781 274.8 C781.1 277.7 782.2 278 783.8 278.6 C785.4 279.2 789.4 278.6 790.5 278.6"/>
<path class="k" d="M786.7 255.7 L885.7 253.8 L891.4 250 L901 249 L904.8 253.8"/>
<path class="m" d="M790.5 278.6 C791.1 277 792.4 271.2 794.3 269 C796.2 266.8 800.6 265.8 801.9 265.2"/>
<path class="m" d="M801.9 265.2 L878 265.2"/>
<path class="m" d="M878 265.2 C879.3 265.8 883.8 267.1 885.7 269 C887.6 270.9 888.7 272.9 889.5 276.7 C890.3 280.5 890.3 289.4 890.5 291.9"/>
<path class="k" d="M790.5 279 L881.9 291.9 L889.5 295.7 L895.2 300.5 L903.8 300.5 L905.7 291.9 L907.6 272.9 L908.6 267.1 L913.3 265.2"/>
<path class="t" d="M849.5 208 L849.5 259.5"/>
<text class="hw" x="716" y="206.5" font-size="15" textLength="176" lengthAdjust="spacingAndGlyphs">Dado spec. a 2 alette</text>
<path class="m" d="M709.5 208.2 L724.8 208.2"/>
<path class="m" d="M791.4 208.2 L895.2 208.2"/>
<text class="hwl" x="715" y="228" font-size="14" textLength="98" lengthAdjust="spacingAndGlyphs">Rw.01-5017</text>
<path class="t" d="M801 240 L812 222" style='stroke:#999'/>
<path class="m" d="M902.9 254 C905.1 253.4 913 252.9 916.2 250.5 C919.4 248.1 920 242 921.9 239.5 C923.8 237 926.6 236.2 927.6 235.5 L952 235.5 "/>
<path class="g3" d="M904.8 254.8 C907 254.4 914.7 254.7 918 252.5 C921.3 250.3 922.9 243.8 924.8 241.4 C926.7 239 924.9 238.4 929.5 237.8 C934.1 237.2 947 236.9 952.4 237.8 C957.8 238.7 958.1 241.7 961.9 243.3 C965.7 244.9 969.4 246.3 975.2 247.5 C981.1 248.7 993.4 250 997 250.5"/>
<path class="t" d="M927.6 234.8 L997 234.8"/>
<path class="m" d="M902.9 254.5 L997 254.5"/>
<path class="t" d="M927.6 254.8 L927.6 265.2"/>
<path class="t" d="M930.5 254.8 L930.5 265.2"/>
<path class="m" style="fill:url(#hb)" d="M908.6 265.2 H988.6 V283.3 H944.8 V275.7 H910.5 Z"/>
<path class="m" style="fill:url(#hf)" d="M937.1 286.2 H985.7 V296.7 H937.1 Z"/>
<path class="m" d="M937.1 286.2 L931.4 288 L931.4 299.5"/>
<path class="t" d="M931.4 304.3 L975.2 304.3"/>
<path class="m" style="fill:#fff" d="M987.6 265.2 H1005.7 V297.6 H987.6 Z M978 297.6 H1011.4 V310 Q1011.4 312.900 1008 312.900 H981 Q978 312.900 978 310 Z"/>
<path class="t" d="M992 266 L992 297"/>
<path class="t" d="M1001 275 L1001 297"/>
<path class="t" d="M988 297.6 L988 312"/>
<path class="t" d="M1003 297.6 L1003 312"/>
<path class="cl2" d="M997.2 225 L997.2 600"/>
<path class="m" style="fill:url(#hb)" d="M998 266 L1045.700 265.500 L1060 260.700 L1081 259.800 L1085.700 263 L1091.900 287.900 L1085.700 290.700 H1077 L1075.200 286 L1070.500 276.400 L1064.800 273.600 L1051.400 273.600 L1036 275.500 L1026.700 278.300 L1021 284 L1017 296.400 L1007.600 298.300 L1006.700 280.200 L998 276 Z"/>
<path class="m" d="M998.1 260.7 L1081 259.8"/>
<path class="m" d="M1077 290.7 L1077 296.4 L1091.9 296.4 L1091.9 287.9"/>
<path class="t" d="M1081 260.2 L1085.7 286 L1091 288"/>
<path class="m" style="fill:#fff" d="M1021 284 H1057 L1051.400 296.400 H1017 Z"/>
<path class="t" d="M1026.7 278.3 L1049 277.5 L1051.4 273.6"/>
<path class="t" d="M1049 277.5 L1051.5 284"/>
<path class="g3" d="M1007.6 301.2 C1011.3 301.2 1022.7 301.4 1030 301.4 C1037.3 301.4 1046.9 301.9 1051.4 301.2 C1055.9 300.5 1055.4 299.5 1057 297.4 C1058.6 295.3 1059.9 290.7 1061 288.8 C1062.1 286.9 1063.1 286.5 1063.5 286"/>
<path class="t" d="M1055 304 L1064.8 304"/>
<path class="t" d="M1073.3 205 L1073.3 267"/>
<text class="hw" x="1078" y="213.5" font-size="16" textLength="196" lengthAdjust="spacingAndGlyphs">Falso Dado Ottagonale</text>
<path class="t" d="M1073.3 217.5 L1290 216.5"/>
<text class="hw" x="1080" y="232.5" font-size="15" textLength="106" lengthAdjust="spacingAndGlyphs">Rw-01-4367</text>
<path class="t" d="M1073.3 235.5 L1237 234.5"/>
<path class="m" d="M1165 246.5 L1171 242"/>
<path class="t" d="M1085 225 L1076 238"/>
<path d="M914.3 276.7 C909.9 279.1 910.6 286.6 909 291 C907.4 295.4 906.9 299.7 904.8 303.3 C902.7 306.9 898 309.6 896.2 312.5 C894.5 315.4 893.8 315.9 894.3 321 C894.8 326.1 897.2 334.8 899 343.3 C900.8 351.8 903.5 364.2 904.8 371.9 C906.1 379.6 907.5 381.8 906.7 389.5 C905.9 397.2 902.4 407.5 900 418 C897.6 428.5 894.6 443.8 892.4 452.4 C890.2 461 888.9 465.5 886.7 469.5 C884.5 473.5 891.1 475.1 879 476.2 C866.9 477.3 826.3 477 814.3 476.2 C802.2 475.4 809.2 474.7 806.7 471.4 C804.2 468.1 801.2 461.3 799 456.2 C796.8 451.1 795.8 444.2 793.3 441 C790.8 437.8 788.5 437.4 783.8 437.1 C779 436.8 769.7 437.1 764.8 439 C759.9 440.9 758.8 442.3 754.3 448.6 C749.8 454.9 741.6 471.1 738 477 C734.4 482.9 734.6 482.2 732.4 483.8 C730.2 485.4 725.9 484.9 724.8 486.7 C723.7 488.4 722.5 493.2 725.7 494.3 C728.9 495.4 738.9 497.1 743.8 493.3 C748.7 489.5 751.7 477.9 755.2 471.4 C758.7 464.9 761.9 457.9 764.8 454.3 C767.7 450.7 769.5 450.1 772.4 449.5 C775.2 448.9 779 448.8 781.9 450.5 C784.8 452.2 787.3 454.6 789.5 460 C791.7 465.4 793.3 476.9 795.2 482.9 C797.1 488.9 798 493.8 801 496.2 C804 498.6 810.8 498.6 813.3 497 C815.8 495.4 808.6 488.4 816.2 486.7 C823.8 485 849.8 485.6 859 486.7 C868.2 487.8 868.4 491.6 871.4 493.3 C874.4 495 869.1 496.4 877 497 C884.9 497.6 912.6 500 919 497 C925.4 494 916.6 485.8 915.2 479 C913.8 472.2 911.1 463 910.5 456 C909.9 449 909.6 446.8 911.4 437 C913.1 427.2 919.2 406.5 921 397 C922.8 387.5 922.4 387.4 921.9 380 C921.4 372.6 919.1 360.9 918 352.9 C916.9 344.9 915.2 337.4 915.2 332 C915.2 326.6 915.8 325 918 320.5 C920.2 316 926.4 308.7 928.6 305.2 C930.8 301.7 930.9 302.4 931.4 299.5 C931.9 296.6 930.8 291.8 931.4 288 C932 284.2 938.1 278.6 935.2 276.7 C932.4 274.8 918.7 274.3 914.3 276.7Z" style="fill:url(#hf)" class="k"/>
<path d="M816.200 486.700 H859 V493.300 H816.200 Z" style="fill:#fff" class="m"/>
<path class="m" d="M813.3 497 L877 497"/>
<path class="m" d="M725.7 494.3 L801 494.3"/>
<path d="M1064.8 286 C1067.1 289.6 1064.4 299.2 1065.2 303 C1066 306.8 1067.7 306.6 1069.5 308.8 C1071.3 311 1074.5 313.2 1076.2 316.4 C1078 319.6 1079.5 321.9 1080 328 C1080.5 334.1 1080 344 1079 352.9 C1078 361.8 1075.1 374.2 1074.3 381.4 C1073.5 388.6 1072.7 386.9 1074.3 396.2 C1075.9 405.5 1082 427 1083.8 437 C1085.5 447 1085.4 448.4 1084.8 456 C1084.2 463.6 1081 476.1 1080 482.9 C1079 489.7 1072 494.3 1079 496.6 C1086 498.9 1114 497.3 1121.9 496.6 C1129.9 495.9 1116.5 493.1 1126.7 492.4 C1136.9 491.7 1172.8 491.7 1182.9 492.4 C1193.1 493.1 1184.4 495.9 1187.6 496.6 C1190.8 497.3 1198.2 502.7 1201.9 496.6 C1205.6 490.5 1207.3 467.7 1209.5 460 C1211.7 452.3 1213 452.6 1215.2 450.5 C1217.4 448.4 1220.2 447.3 1222.9 447.6 C1225.6 447.9 1228.2 448.1 1231.4 452.4 C1234.6 456.7 1238.6 467.6 1241.9 473.3 C1245.2 479 1247.9 483.4 1251.4 486.7 C1254.9 490 1259.1 492.2 1262.9 493.3 C1266.7 494.4 1272.6 494.9 1274.3 493.3 C1276 491.7 1274.6 485.7 1273.3 483.8 C1272 481.9 1269.7 484 1266.7 481.9 C1263.7 479.8 1258.7 476 1255.2 471.4 C1251.7 466.8 1248.9 459.7 1245.7 454.3 C1242.5 448.9 1240 442.2 1236.2 439 C1232.4 435.8 1227.4 435.2 1222.9 435.2 C1218.5 435.2 1213.3 436.4 1209.5 439 C1205.7 441.6 1202.8 445.7 1200 450.5 C1197.2 455.3 1195.6 463.5 1192.4 467.6 C1189.2 471.7 1193.1 473.8 1181 474.9 C1168.9 476 1132.1 476.1 1120 474.3 C1107.9 472.5 1111.8 470 1108.6 463.8 C1105.4 457.6 1103.5 447.1 1101 437 C1098.5 426.9 1095.2 412.4 1093.3 402.9 C1091.4 393.4 1089.8 385.3 1089.5 380 C1089.2 374.7 1089.8 377.1 1091.4 371 C1093 364.9 1097.2 352.1 1099 343.3 C1100.8 334.5 1101.7 323.4 1101.9 318 C1102.1 312.6 1101.4 313 1100 310.7 C1098.6 308.4 1096 305.8 1093.3 304 C1090.6 302.2 1086.3 301.1 1083.8 300.2 C1081.2 299.2 1079.4 300.5 1078 298.3 C1076.6 296.1 1076.5 290.6 1075.2 287 C1074 283.4 1072.2 279.2 1070.5 277 C1068.8 274.8 1066.5 274.4 1064.8 274 C1063 273.6 1062.2 273.3 1060 274.5 C1057.8 275.7 1050.6 279.3 1051.4 281.2 C1052.2 283.1 1062.5 282.4 1064.8 286Z" style="fill:url(#hf)" class="k"/>
<path class="m" d="M1201.9 493.3 L1274.3 493.3"/>
<path class="m" d="M921.9 366.2 L1074.3 366.2"/>
<path class="m" d="M921 395.9 L1075 395.9"/>
<path class="m" d="M915.2 482.9 L1080 482.9"/>
<path class="m" d="M877 494.3 L1079 494.3"/>
<path class="m" d="M725.7 497.2 L1200 497"/>
<path class="t" d="M702 500 L1274 500"/>
<path class="cl" d="M1222.5 412 L1222.5 479"/>
<path class="m" d="M1167.6 435.2 L1222.9 435.2"/>
<path class="t" d="M1213 458 L1232 458"/>
<path class="t" d="M772 432 L772 470"/>
<path class="t" d="M762 455 L782 455"/>
<path class="t" d="M1085.3 351.3 L1200 351.3"/>
<text class="hw" x="1131" y="349" font-size="17" textLength="128" lengthAdjust="spacingAndGlyphs">Tamburo S72</text>
<path class="t" d="M1128 351.3 L1265 351.3"/>
<text class="hw" x="1125" y="368" font-size="15" textLength="112" lengthAdjust="spacingAndGlyphs">Rw-01-4540</text>
<path class="t" d="M1117 352 L1117 369.5 L1274 369.5"/>
<path class="t" d="M1131 357 L1119 377"/>
<path class="t" d="M725.7 486.7 L725.7 598"/>
<path class="t" d="M816.2 497 L816.2 522"/>
<path class="t" d="M859 486.7 L859 522"/>
<path class="t" d="M918 497 L918 523"/>
<path class="cl" d="M837.5 399 L837.5 547.6"/>
<path class="t" d="M800 500 L800 570.5"/>
<path class="t" d="M1079 497 L1079 523"/>
<path class="t" d="M1161.9 460 L1161.9 549.5"/>
<path class="t" d="M1200 494 L1200 570.5"/>
<path class="t" d="M1273.9 493 L1273.9 597"/>
<path class="t" d="M787.6 522 L886.7 522"/>
<path class="f" d="M816.2 522 L804.6 523.6 L804.6 520.4Z"/>
<path class="f" d="M859 522 L870.6 520.4 L870.6 523.6Z"/>
<path class="t" d="M918 521.5 L1079 521.3"/>
<path class="f" d="M918 521.5 L931 519.9 L931 523.1Z"/>
<path class="f" d="M1079 521.3 L1066 522.9 L1066 519.7Z"/>
<path class="t" d="M837.5 545.2 L1161.9 545.3"/>
<path class="f" d="M837.5 545.2 L850.5 543.6 L850.5 546.8Z"/>
<path class="f" d="M1161.9 545.3 L1148.9 546.9 L1148.9 543.7Z"/>
<path class="t" d="M800 570.2 L1200 569.7"/>
<path class="f" d="M800 570.2 L813 568.6 L813 571.8Z"/>
<path class="f" d="M1200 569.7 L1187 571.3 L1187 568.1Z"/>
<path class="t" d="M725.7 594.3 L1273.9 594"/>
<path class="f" d="M725.7 594.3 L740.2 592.7 L740.2 595.9Z"/>
<path class="f" d="M1273.9 594 L1259.4 595.6 L1259.4 592.4Z"/>
<ellipse class="t" cx="829.5" cy="519" rx="5.5" ry="1.7" style="stroke-width:1.5;stroke:#1c1c1c"/>
<path class="t" d="M835 508 L822 534"/>
<text class="hw" x="842" y="521" font-size="14" textLength="26" lengthAdjust="spacingAndGlyphs">17.5</text>
<ellipse class="t" cx="986.7" cy="516" rx="5.5" ry="1.7" style="stroke-width:1.5;stroke:#1c1c1c"/>
<path class="t" d="M992.2 505 L979.2 531"/>
<ellipse class="t" cx="985.7" cy="541" rx="5.5" ry="1.7" style="stroke-width:1.5;stroke:#1c1c1c"/>
<path class="t" d="M991.2 530 L978.2 556"/>
<ellipse class="t" cx="988.6" cy="564.8" rx="5.5" ry="1.7" style="stroke-width:1.5;stroke:#1c1c1c"/>
<path class="t" d="M994.1 553.8 L981.1 579.8"/>
<ellipse class="t" cx="986" cy="589" rx="5.5" ry="1.7" style="stroke-width:1.5;stroke:#1c1c1c"/>
<path class="t" d="M991.5 578 L978.5 604"/>
<text class="hw" x="1000" y="522" font-size="15" textLength="24" lengthAdjust="spacingAndGlyphs">54.8</text>
<text class="hw" x="1028" y="512" font-size="10">+0.1</text>
<text class="hw" x="1036" y="521" font-size="9">0</text>
<text class="hw" x="1003" y="543.8" font-size="15" textLength="24" lengthAdjust="spacingAndGlyphs">130</text>
<text class="hw" x="1029" y="535" font-size="10">±0.1</text>
<text class="hw" x="1059" y="543.8" font-size="15" textLength="120" lengthAdjust="spacingAndGlyphs">n°4 fori equid.</text>
<text class="hw" x="1004" y="566.7" font-size="15" textLength="25" lengthAdjust="spacingAndGlyphs">160</text>
<text class="hw" x="1003" y="590" font-size="15" textLength="26" lengthAdjust="spacingAndGlyphs">219</text>
<path class="t" d="M786.7 437.5 C789.1 437.4 794.6 437.6 801 437 C807.4 436.4 821 434.5 825 434"/>
<path class="t" d="M838 435 C841.7 434.9 852.4 433.2 860 434.5 C867.6 435.8 879.8 441.5 883.8 442.9"/>
<path class="t" d="M883.8 442.9 L854.3 495.2"/>
<path class="f" d="M883.8 442.9 L871.3 438.9 L872.7 435.9Z"/>
<path class="m" d="M786 437 L800 437"/>
<text class="hw" x="842" y="429" font-size="14">60°</text>
<text class="hw" x="829" y="471" font-size="13" transform="rotate(-85 829 471)">3.5</text>
<path class="t" d="M832.4 464 L832.4 505.7"/>
<path class="f" d="M832.4 486.7 L830.8 475.1 L834 475.1Z"/>
<path class="f" d="M832.4 497.5 L834 509.1 L830.8 509.1Z"/>
<text class="hw" x="936" y="471" font-size="13" textLength="50" lengthAdjust="spacingAndGlyphs">sm. 1.5</text>
<path class="t" d="M938 473.3 L975 473.3"/>
<path class="t" d="M938 473.3 L904.8 506.7"/>
<path class="kk" d="M831 694.8 L831 899"/>
<path class="m" d="M831 700.5 L1316.5 698.6"/>
<path class="m" d="M831 714.2 L1316.5 711.9"/>
<path class="m" d="M831 726.8 L1316.5 725.2"/>
<path class="m" d="M831 740.1 L1316.5 738.2"/>
<path class="m" d="M831 753.4 L1316.5 751.5"/>
<path class="k" d="M831 766.2 L1316.5 764.3"/>
<path class="k" d="M831 818.2 L1316.5 816.7"/>
<path class="m" d="M831 831 L1182.5 829.5"/>
<path class="m" d="M1182.5 828.8 L1316.5 828.2"/>
<path class="m" d="M831 852.5 L1182.5 851.5"/>
<path class="k" d="M831 872.2 L1316.5 869"/>
<path class="m" d="M838 883 L1316.5 881.8"/>
<path class="t" d="M850.5 692.9 L850.5 766"/>
<path class="t" d="M892 692.9 L892 766"/>
<path class="k" d="M979 766 L979 818"/>
<path class="k" d="M1203.8 764.5 L1203.8 816.7"/>
<path class="m" d="M973 831 L973 852.5"/>
<path class="m" d="M1182.5 817 L1182.5 870"/>
<path class="m" d="M1230.2 828.5 L1230.2 869.5"/>
<path class="m" d="M1271 817 L1271 869.5"/>
<path class="m" d="M906.7 871 L906.7 898"/>
<path class="m" d="M976.2 871 L976.2 898"/>
<path class="m" d="M1039.4 871 L1039.4 898"/>
<path class="m" d="M1092.4 871 L1092.4 898"/>
<path class="m" d="M1144.8 871 L1144.8 898"/>
<path class="m" d="M1230.5 871 L1230.5 898"/>
<text class="pt" x="841.5" y="761.5" font-size="5.5" text-anchor="middle" font-weight="700" letter-spacing="0" >N.</text>
<text class="pt" x="872" y="761.5" font-size="5.5" text-anchor="middle" font-weight="400" letter-spacing="0" >Data</text>
<text class="pt" x="1105.5" y="760" font-size="5.5" text-anchor="middle" font-weight="700" letter-spacing="0" textLength="60" lengthAdjust="spacing" >Modifiche</text>
<text class="pt" x="905" y="783.5" font-size="9.5" text-anchor="middle" font-weight="700" letter-spacing="0" textLength="131" lengthAdjust="spacingAndGlyphs" transform="translate(905 783.500) scale(1 1.150) translate(-905 -783.500)">“ COSTRUZIONI MECCANICHE RHO „</text>
<text class="pt" x="906" y="795.6" font-size="7.2" text-anchor="middle" font-weight="700" letter-spacing="0" textLength="45" lengthAdjust="spacing" >MILANO</text>
<text class="pt" x="906" y="810.6" font-size="7.2" text-anchor="middle" font-weight="400" letter-spacing="0" textLength="95" lengthAdjust="spacing" style="stroke:#222;stroke-width:.25">UFFICIO TECNICO</text>
<text class="pt" x="1006.5" y="826.5" font-size="5.8" text-anchor="middle" font-weight="700" letter-spacing="0" textLength="80" lengthAdjust="spacing" >Materiale</text>
<text class="pt" x="840.5" y="847" font-size="6" text-anchor="start" font-weight="700" letter-spacing="0" >Tipo :</text>
<text class="pt" x="983.5" y="846" font-size="6" text-anchor="start" font-weight="700" letter-spacing="0" >Dimensioni :</text>
<text class="pt" x="840.5" y="867.8" font-size="6" text-anchor="start" font-weight="700" letter-spacing="0" >Trattamento :</text>
<path class="dot" d="M862 847.5 L967.6 847.5"/>
<path class="dot" d="M1024 846.5 L1181 845.5"/>
<path class="dot" d="M884 868 L1180 866.5"/>
<text class="pt" x="1226.7" y="825" font-size="6" text-anchor="middle" font-weight="400" letter-spacing="0" style="stroke:#222;stroke-width:.2">Peso Unitario</text>
<text class="pt" x="1294.9" y="824.6" font-size="6" text-anchor="middle" font-weight="700" letter-spacing="0" >Quantità</text>
<text class="pt" x="1206" y="835.5" font-size="4.6" text-anchor="middle" font-weight="700" letter-spacing="0" >Grezzo</text>
<text class="pt" x="1251" y="835" font-size="4.6" text-anchor="middle" font-weight="700" letter-spacing="0" >Finito</text>
<text class="pt" x="869.5" y="880.5" font-size="6" text-anchor="middle" font-weight="700" letter-spacing="0" >Disegnato</text>
<text class="pt" x="942" y="880.2" font-size="6" text-anchor="middle" font-weight="700" letter-spacing="0" >Controllato</text>
<text class="pt" x="1008" y="879.5" font-size="6" text-anchor="middle" font-weight="700" letter-spacing="0" >Data</text>
<text class="pt" x="1065.5" y="879" font-size="6" text-anchor="middle" font-weight="700" letter-spacing="0" >Scala</text>
<text class="pt" x="1119" y="878.7" font-size="6" text-anchor="middle" font-weight="700" letter-spacing="0" >Partic.</text>
<text class="pt" x="1188" y="878.3" font-size="6" text-anchor="middle" font-weight="700" letter-spacing="0" >Originale</text>
<text class="pt" x="1274.3" y="877" font-size="6" text-anchor="middle" font-weight="700" letter-spacing="0" >Sost. il</text>
<text class="hw" x="980" y="692" font-size="17" textLength="122" lengthAdjust="spacingAndGlyphs">Direttore Generale</text>
<text class="hw" x="1132" y="692" font-size="17" textLength="183" lengthAdjust="spacingAndGlyphs">Rag. Agostino Codeluppi.</text>
<path class="t" d="M1290 707 L1297 692"/>
<path class="t" d="M1296 707 L1303 692"/>
<text class="hw" x="985.5" y="788" font-size="19" textLength="204" lengthAdjust="spacingAndGlyphs">Ruota Rw Record. Tipo S.</text>
<text class="hw" x="983.5" y="811" font-size="18" textLength="224" lengthAdjust="spacingAndGlyphs">5½K×16" Maserati 3500/5000</text>
<path class="t" d="M1172 819 L1184 800"/>
<path class="t" d="M990 807 L983 822"/>
<text class="hw" x="1211" y="797.6" font-size="22" textLength="73" lengthAdjust="spacingAndGlyphs">Esp. 510</text>
<path class="t" d="M1230 800 L1222 816"/>
<text class="hw" x="982" y="894.3" font-size="13" textLength="50" lengthAdjust="spacingAndGlyphs">19-5-86</text>
<text class="hw" x="1055" y="894.3" font-size="12" textLength="15" lengthAdjust="spacingAndGlyphs">1:1</text>
<path class="t" d="M846 890 C850 882 858 884 852 892 C849 896 856 896 862 888 C860 894 864 896 868 890 L872 896"/>
<text x="1318" y="924.800" font-family="Liberation Sans" font-size="15" fill="#111">19</text>
</g>
<rect x="336" y="160" width="990" height="745" filter="url(#speck2)" opacity=".7"/>
<rect x="336" y="160" width="990" height="745" filter="url(#speck)" mask="url(#smk)" opacity=".85"/>
<circle cx="562.9" cy="569.5" r="2.6" fill="#1c1c1c"/>
<circle cx="849" cy="261" r="2.4" fill="#1c1c1c"/>
<circle cx="1073.3" cy="267.1" r="2.6" fill="#1c1c1c"/>
<circle cx="1085.3" cy="351.3" r="2.6" fill="#1c1c1c"/>
<circle cx="800.5" cy="438" r="2" fill="#1c1c1c"/>
<circle cx="751.4" cy="455.8" r="2.4" fill="#1c1c1c"/>
<circle cx="739" cy="476.2" r="2.4" fill="#1c1c1c"/>
<circle cx="899" cy="334.8" r="2.4" fill="#1c1c1c"/>
<circle cx="901.9" cy="353.8" r="2.4" fill="#1c1c1c"/>
</svg><!--/DRAW--><div id="page2"></div></div>
<div id="scroll">
<svg class="abs" style="left:4px;top:5px" width="9" height="6" viewBox="0 0 9 6"><path d="M4.500 .5 L8.500 5 H.5 Z" fill="#505050"/></svg>
<div class="abs" style="left:2px;top:505px;width:13px;height:17px;background:#c1c1c1"></div>
<svg class="abs" style="left:4px;top:872px" width="9" height="6" viewBox="0 0 9 6"><path d="M4.500 5.500 L8.500 1 H.5 Z" fill="#505050"/></svg>
</div>
<!--TASKBAR-->
<div id="taskbar">
<svg class="abs" style="left:16px;top:12px" width="16" height="16" viewBox="0 0 16 16"><path d="M0 2.300 L6.600 1.400 V7.600 H0 Z M7.400 1.300 L16 0 V7.600 H7.400 Z M0 8.400 H6.600 V14.600 L0 13.700 Z M7.400 8.400 H16 V16 L7.400 14.700 Z" fill="#fff"/></svg>
<div class="abs" style="left:48px;top:0;width:344px;height:40px;background:#f2f2f2;border-top:1px solid #fafafa;overflow:hidden">
<svg class="abs" style="left:11px;top:9px" width="20" height="20" viewBox="0 0 20 20"><circle cx="12" cy="7.500" r="5.200" fill="none" stroke="#222" stroke-width="1.500"/><path d="M8.300 11.300 L1.500 18.200" stroke="#222" stroke-width="1.600"/></svg>
<span class="abs" style="left:40px;top:10px;font-size:15px;letter-spacing:-.1px;color:#2b2b2b;line-height:20px">Taper ici pour rechercher</span>
<svg class="abs" style="left:262px;top:0" width="82" height="40" viewBox="0 0 82 40">
<path d="M19 8 l1.500 -3 l1.500 3 l3 1.500 l-3 1.500 l-1.500 3 l-1.500 -3 l-3 -1.500 z" fill="#d77be6" transform="rotate(20 20.500 9.500)"/>
<circle cx="69.500" cy="6.500" r="2" fill="#f0b02c"/><circle cx="10.500" cy="23.500" r="1.800" fill="#6cc072"/>
<path d="M28 40 L40 24 L48 17 L56 13 L62 15 L70 10 L78 13 L82 12 V40 Z" fill="#8fc2d6"/>
<path d="M20 40 L34 28 L42 24 L50 19 L60 22 L68 17 L82 20 V40 Z" fill="#5a9bb5"/>
<path d="M10 40 L24 31 L34 33 L46 25 L58 28 L70 23 L82 27 V40 Z" fill="#2f6f8a"/>
<path d="M6 40 L8 35 L10 38 L12 32 L15 38 L17 33 L20 38 L22 32 L25 38 L28 33 L31 38 L33 31 L36 38 L39 33 L42 38 L45 32 L48 38 L51 33 L54 38 L57 32 L60 38 L63 33 L66 38 L69 32 L72 38 L75 33 L78 38 L80 33 L82 36 V40 Z" fill="#123a33"/>
</svg>
</div>
<svg class="abs" style="left:406px;top:10px" width="20" height="20" viewBox="0 0 20 20"><circle cx="10" cy="10" r="6.600" fill="none" stroke="#fff" stroke-width="2.100"/></svg>
<svg class="abs" style="left:454px;top:10px" width="20" height="18" viewBox="0 0 20 18"><path d="M1.500 1.800 H13 M1.500 15.500 H13 M3.200 4.800 H11.300 V12.500 H3.200 Z M16.500 1 V16.500" stroke="#fff" stroke-width="1.300" fill="none"/><rect x="15.300" y="4.800" width="2.600" height="2.600" fill="#fff"/></svg>
<svg class="abs" style="left:501px;top:8px" width="26" height="26" viewBox="0 0 26 26"><path d="M8 6 V3.500 a1.500 1.500 0 0 1 1.500 -1.500 H16.500 a1.500 1.500 0 0 1 1.500 1.500 V6" fill="none" stroke="#3aa0d8" stroke-width="2"/><path d="M1.500 6 H24.500 V21 a3.500 3.500 0 0 1 -3.500 3.500 H5 a3.500 3.500 0 0 1 -3.500 -3.500 Z" fill="#f3f3f3"/><rect x="8.500" y="10.500" width="4" height="4" fill="#f25022"/><rect x="13.500" y="10.500" width="4" height="4" fill="#7fba00"/><rect x="8.500" y="15.500" width="4" height="4" fill="#00a4ef"/><rect x="13.500" y="15.500" width="4" height="4" fill="#ffb900"/></svg>
<svg class="abs" style="left:552px;top:10px" width="24" height="20" viewBox="0 0 24 20"><path d="M1 2 a1 1 0 0 1 1 -1 H9 L11 3 H22 a1 1 0 0 1 1 1 V18 H1 Z" fill="#e9b43c"/><path d="M1 5 H23 V18 a1 1 0 0 1 -1 1 H2 a1 1 0 0 1 -1 -1 Z" fill="#fbd667"/><path d="M5 19 V12.500 a1 1 0 0 1 1 -1 H18 a1 1 0 0 1 1 1 V19 H15 V15 H9 V19 Z" fill="#3f8fd1"/></svg>
<svg class="abs" style="left:600px;top:10px" width="24" height="20" viewBox="0 0 24 20"><path d="M2 3 L20 1 L22 2 V18 L20 19 L2 17 Z" fill="#8fc3e6"/><path d="M20 1 L22 2 V18 L20 19 Z" fill="#5f9ac6"/><circle cx="11" cy="10" r="6.200" fill="#f28a1c"/><path d="M8.800 6.300 L15.200 10 L8.800 13.700 Z" fill="#fff"/></svg>
<div class="abs" style="left:638px;top:0;width:48px;height:40px;background:#4b4e51"></div>
<svg class="abs" style="left:650px;top:8px" width="24" height="24" viewBox="0 0 24 24"><circle cx="12" cy="12" r="11.300" fill="#fbc116"/><path d="M12 12 L2.200 6.400 A11.300 11.300 0 0 1 21.800 6.400 Z" fill="#e33b2e"/><path d="M12 12 L2.200 6.400 A11.300 11.300 0 0 0 12 23.300 L16.500 14.600 Z" fill="#2da94f"/><path d="M2.200 6.400 H21.800 L12 12 Z" fill="#e33b2e"/><circle cx="12" cy="12" r="5.300" fill="#fff"/><circle cx="12" cy="12" r="4.200" fill="#3f7de0"/></svg>
<svg class="abs" style="left:698px;top:7px" width="26" height="26" viewBox="0 0 26 26"><circle cx="13" cy="13.500" r="11.500" fill="#1f56b8"/><path d="M4 7 C8 1 18 0 23 6 C20 4 16 4 13 6 C9 5 6 6 4 7Z" fill="#4aa3ea"/><path d="M2 12 C2 20 10 26 18 23 C12 23 6 18 5 11 Z" fill="#112f7a"/><path d="M3.500 11 L16 8.500 L20 17 L7 20.500 Z" fill="#f4f6fb"/><path d="M3.500 11 L12.500 15 L16 8.500" fill="none" stroke="#b9c4dd" stroke-width="1"/><path d="M3 15 L14 19 L8 21.500 Z" fill="#e4e9f5"/></svg>
<svg class="abs" style="left:748px;top:8px" width="24" height="24" viewBox="0 0 24 24"><rect x="1" y="1.500" width="22" height="21.500" rx="1" fill="#2a9be8"/><path d="M1 23 V15 L9 8 L18 17 V23 Z" fill="#0f4c97"/><path d="M12 23 L18.500 13.500 L23 18 V23 Z" fill="#3b6fd0"/><circle cx="16.500" cy="7" r="2.100" fill="#eaf6ff"/></svg>
<svg class="abs" style="left:797px;top:7px" width="24" height="26" viewBox="0 0 24 26"><defs><linearGradient id="p3" x1="0" y1="0" x2="1" y2="1"><stop offset="0" stop-color="#f7a13a"/><stop offset=".35" stop-color="#ef4f7c"/><stop offset=".6" stop-color="#8a57d8"/><stop offset="1" stop-color="#23a3e8"/></linearGradient></defs><path d="M13 1 C15 4 14 6 15.500 8.500 C18 12 21.500 14 21.500 18 C21.500 22.500 17.500 25.300 12.500 25.300 C7.500 25.300 3.500 22.500 3.500 18 C3.500 12 10 8 13 1 Z" fill="url(#p3)"/><path d="M4 19 C8 22 16 22 21 17 C22 22 17 25.300 12.500 25.300 C8 25.300 4.500 23 4 19Z" fill="#2bb0ef"/></svg>
<div class="abs" style="left:544px;top:38px;width:40px;height:2px;background:#6b99cc"></div>
<div class="abs" style="left:638px;top:38px;width:48px;height:2px;background:#6b99cc"></div>
<div class="abs" style="left:691px;top:38px;width:40px;height:2px;background:#6b99cc"></div>
<div class="abs" style="left:740px;top:38px;width:40px;height:2px;background:#6b99cc"></div>
<div class="abs" style="left:789px;top:38px;width:40px;height:2px;background:#6b99cc"></div>
<svg class="abs" style="left:1325px;top:10px" width="24" height="18" viewBox="0 0 24 18"><path d="M6 17 a5 5 0 0 1 -.5 -10 a7 7 0 0 1 13 -1 a5.500 5.500 0 0 1 0 11 Z" fill="#cfe6f7"/><path d="M6 17 a5 5 0 0 1 -3.500 -8.500 C5 13 12 15 20 12 a5.500 5.500 0 0 1 -1.500 5 Z" fill="#a4cdea"/></svg>
<span class="abs tt" style="left:1357px;top:12px;font-size:14px;letter-spacing:-.5px">19°C</span>
<span class="abs tt" style="left:1395px;top:12px;font-size:14px;letter-spacing:-.05px">Nuageux</span>
<svg class="abs" style="left:1466px;top:14px" width="14" height="10" viewBox="0 0 14 10"><path d="M1.500 8 L7 2.500 L12.500 8" stroke="#fff" stroke-width="1.300" fill="none"/></svg>
<svg class="abs" style="left:1489px;top:10px" width="16" height="20" viewBox="0 0 16 20"><rect x="2.500" y="5.500" width="8" height="8" rx="1.500" fill="none" stroke="#fff" stroke-width="1.200"/><path d="M10.500 8 L14 6 V13 L10.500 11" fill="none" stroke="#fff" stroke-width="1.200"/><path d="M3 3.500 C4 1.500 9 1.500 10 3.500 M3 15.500 C4 17.500 9 17.500 10 15.500" fill="none" stroke="#fff" stroke-width="1.100"/></svg>
<svg class="abs" style="left:1511px;top:11px" width="20" height="18" viewBox="0 0 20 18"><path d="M1.500 6.500 H4.500 L8.500 2.500 V15.500 L4.500 11.500 H1.500 Z" fill="none" stroke="#fff" stroke-width="1.100"/><path d="M11 6 C12.500 7.500 12.500 10.500 11 12 M13.500 4 C16 6.500 16 11.500 13.500 14 M16 2 C19.500 5.500 19.500 12.500 16 16" fill="none" stroke="#fff" stroke-width="1.100"/></svg>
<span class="abs tt" style="left:1540px;top:4px;font-size:12px;letter-spacing:-.6px">FRA</span>
<span class="abs tt" style="left:1538px;top:21px;font-size:12px;letter-spacing:-1.1px">BEFR</span>
<span class="abs tt" style="left:1584px;top:4px;font-size:12px;letter-spacing:-.5px">01:55</span>
<span class="abs tt" style="left:1575px;top:21px;font-size:12px;letter-spacing:-.3px">16-06-22</span>
<svg class="abs" style="left:1637px;top:10px" width="28" height="26" viewBox="0 0 28 26"><path d="M2 1.500 H17.500 V13.500 H6.500 L2 17.500 Z" fill="#fff"/><path d="M4.500 5 H15 M4.500 7.700 H15 M4.500 10.400 H15" stroke="#1d2024" stroke-width="1"/><circle cx="17.500" cy="17" r="6.800" fill="#26282b" stroke="#9a9a9a" stroke-width="1"/><text x="17.500" y="21" font-family="Liberation Sans" font-size="11" fill="#fff" text-anchor="middle">3</text></svg>
<div class="abs" style="left:1675px;top:0;width:1px;height:40px;background:#6a6a6a"></div>
</div>
</body></html>
